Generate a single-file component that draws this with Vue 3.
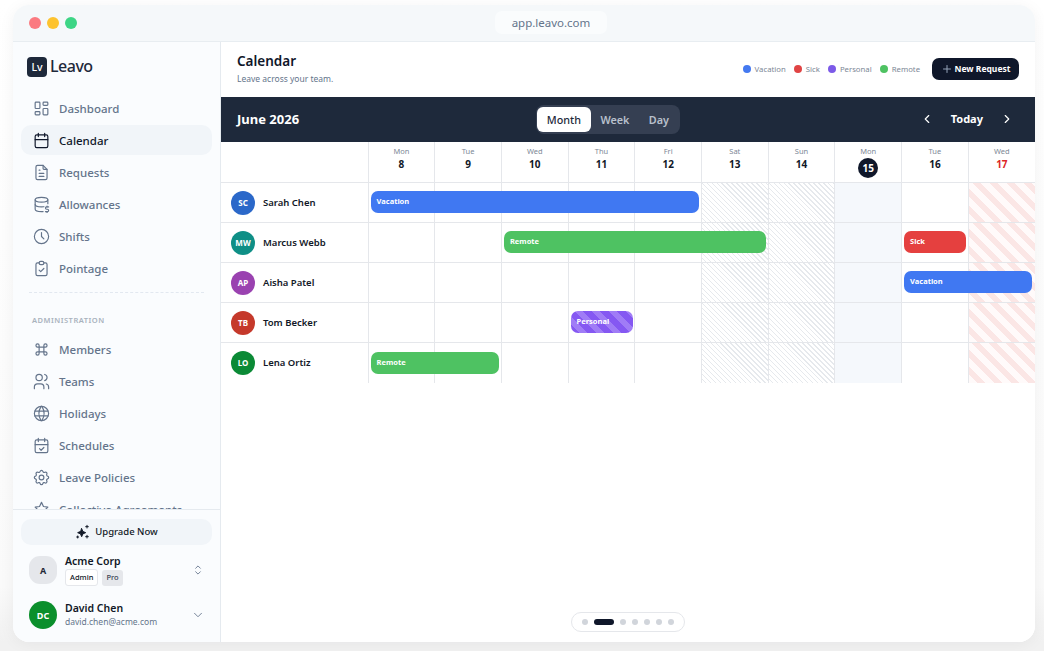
<script setup>
const mainNav = [
  { label: 'Dashboard', icon: 'dashboard' },
  { label: 'Calendar', icon: 'calendar', active: true },
  { label: 'Requests', icon: 'file' },
  { label: 'Allowances', icon: 'database' },
  { label: 'Shifts', icon: 'clock' },
  { label: 'Pointage', icon: 'clipboard' }
]

const adminNav = [
  { label: 'Members', icon: 'command' },
  { label: 'Teams', icon: 'users' },
  { label: 'Holidays', icon: 'globe' },
  { label: 'Schedules', icon: 'calcheck' },
  { label: 'Leave Policies', icon: 'gear' },
  { label: 'Collective Agreements', icon: 'award' }
]

const icons = {
  dashboard: ['M5 4h4a1 1 0 0 1 1 1v6a1 1 0 0 1-1 1H5a1 1 0 0 1-1-1V5a1 1 0 0 1 1-1z', 'M5 16h4a1 1 0 0 1 1 1v2a1 1 0 0 1-1 1H5a1 1 0 0 1-1-1v-2a1 1 0 0 1 1-1z', 'M15 12h4a1 1 0 0 1 1 1v6a1 1 0 0 1-1 1h-4a1 1 0 0 1-1-1v-6a1 1 0 0 1 1-1z', 'M15 4h4a1 1 0 0 1 1 1v2a1 1 0 0 1-1 1h-4a1 1 0 0 1-1-1V5a1 1 0 0 1 1-1z'],
  calendar: ['M6 5h12a2 2 0 0 1 2 2v12a2 2 0 0 1-2 2H6a2 2 0 0 1-2-2V7a2 2 0 0 1 2-2z', 'M16 3v4', 'M8 3v4', 'M4 11h16'],
  file: ['M14 3v4a1 1 0 0 0 1 1h4', 'M17 21H7a2 2 0 0 1-2-2V5a2 2 0 0 1 2-2h7l5 5v11a2 2 0 0 1-2 2z', 'M9 9h1', 'M9 13h6', 'M9 17h6'],
  database: ['M4 6c0 1.7 3.6 3 8 3s8-1.3 8-3-3.6-3-8-3-8 1.3-8 3', 'M4 6v6c0 1.7 3.6 3 8 3 1 0 2-.1 3-.2', 'M20 6v5', 'M4 12v6c0 1.7 3.6 3 8 3 .7 0 1.300-.03 2-.1', 'M21 15h-2.500a1.500 1.500 0 0 0 0 3h1a1.500 1.500 0 0 1 0 3H17', 'M19 21v1m0-8v1'],
  clock: ['M3 12a9 9 0 1 0 18 0a9 9 0 0 0-18 0', 'M12 7v5l3 3'],
  clipboard: ['M9 5H7a2 2 0 0 0-2 2v12a2 2 0 0 0 2 2h10a2 2 0 0 0 2-2V7a2 2 0 0 0-2-2h-2', 'M9 5a2 2 0 0 1 2-2h2a2 2 0 0 1 2 2a2 2 0 0 1-2 2h-2a2 2 0 0 1-2-2z', 'M9 14l2 2l4-4'],
  command: ['M7 9a2 2 0 1 1 2-2v10a2 2 0 1 1-2-2h10a2 2 0 1 1-2 2V7a2 2 0 1 1 2 2H7'],
  users: ['M5 7a4 4 0 1 0 8 0a4 4 0 0 0-8 0', 'M3 21v-2a4 4 0 0 1 4-4h4a4 4 0 0 1 4 4v2', 'M16 3.130a4 4 0 0 1 0 7.750', 'M21 21v-2a4 4 0 0 0-3-3.850'],
  globe: ['M3 12a9 9 0 1 0 18 0a9 9 0 0 0-18 0', 'M3.600 9h16.800', 'M3.600 15h16.800', 'M11.500 3a17 17 0 0 0 0 18', 'M12.500 3a17 17 0 0 1 0 18'],
  calcheck: ['M6 5h12a2 2 0 0 1 2 2v12a2 2 0 0 1-2 2H6a2 2 0 0 1-2-2V7a2 2 0 0 1 2-2z', 'M16 3v4', 'M8 3v4', 'M4 11h16', 'M9.500 16l2 2l3.500-3.500'],
  gear: ['M10.300 4.300c.4-1.800 3-1.800 3.400 0a1.700 1.700 0 0 0 2.600 1.100c1.500-.9 3.300.8 2.400 2.400a1.700 1.700 0 0 0 1 2.500c1.800.4 1.800 3 0 3.400a1.700 1.700 0 0 0-1 2.600c.9 1.500-.9 3.300-2.400 2.400a1.700 1.700 0 0 0-2.600 1c-.4 1.800-3 1.800-3.400 0a1.700 1.700 0 0 0-2.600-1c-1.500.9-3.300-.9-2.400-2.400a1.700 1.700 0 0 0-1-2.600c-1.800-.4-1.800-3 0-3.400a1.700 1.700 0 0 0 1-2.500c-.9-1.600.9-3.300 2.400-2.400c1 .6 2.300.1 2.600-1.100z', 'M9 12a3 3 0 1 0 6 0a3 3 0 0 0-6 0'],
  award: ['M12 3l2.500 5.200 5.500.8-4 4 1 5.500-5-2.700-5 2.700 1-5.500-4-4 5.500-.8z']
}

const days = [
  { name: 'Mon', num: 8 },
  { name: 'Tue', num: 9 },
  { name: 'Wed', num: 10 },
  { name: 'Thu', num: 11 },
  { name: 'Fri', num: 12 },
  { name: 'Sat', num: 13, kind: 'weekend' },
  { name: 'Sun', num: 14, kind: 'weekend' },
  { name: 'Mon', num: 15, kind: 'today' },
  { name: 'Tue', num: 16 },
  { name: 'Wed', num: 17, kind: 'holiday' }
]

const people = [
  { initials: 'SC', name: 'Sarah Chen', color: '#2b68c9', bars: [{ label: 'Vacation', type: 'vacation', from: 0, span: 5 }] },
  { initials: 'MW', name: 'Marcus Webb', color: '#0f8f86', bars: [{ label: 'Remote', type: 'remote', from: 2, span: 4 }, { label: 'Sick', type: 'sick', from: 8, span: 1 }] },
  { initials: 'AP', name: 'Aisha Patel', color: '#9a42b0', bars: [{ label: 'Vacation', type: 'vacation edge', from: 8, span: 2 }] },
  { initials: 'TB', name: 'Tom Becker', color: '#c5392b', bars: [{ label: 'Personal', type: 'personal', from: 3, span: 1 }] },
  { initials: 'LO', name: 'Lena Ortiz', color: '#0b8a36', bars: [{ label: 'Remote', type: 'remote', from: 0, span: 2 }] }
]

const legend = [
  { label: 'Vacation', color: '#4479f0' },
  { label: 'Sick', color: '#e04444' },
  { label: 'Personal', color: '#7c5ae8' },
  { label: 'Remote', color: '#4ec262' }
]
</script>

<template>
  <div class="page">
    <div class="window">
      <div class="titlebar">
        <div class="lights">
          <span class="light red"></span>
          <span class="light yellow"></span>
          <span class="light green"></span>
        </div>
        <div class="url">app.leavo.com</div>
      </div>

      <div class="body">
        <aside class="sidebar">
          <div class="logo">
            <span class="logo-mark">Lv</span>
            <span class="logo-name">Leavo</span>
          </div>

          <nav class="nav">
            <a v-for="item in mainNav" :key="item.label" class="nav-item" :class="{ active: item.active }">
              <svg class="nav-icon" viewBox="0 0 24 24"><path v-for="d in icons[item.icon]" :key="d" :d="d" /></svg>
              {{ item.label }}
            </a>
            <div class="nav-divider"></div>
            <div class="nav-heading">ADMINISTRATION</div>
            <a v-for="item in adminNav" :key="item.label" class="nav-item">
              <svg class="nav-icon" viewBox="0 0 24 24"><path v-for="d in icons[item.icon]" :key="d" :d="d" /></svg>
              {{ item.label }}
            </a>
          </nav>

          <div class="side-foot">
            <button class="upgrade">
              <svg class="spark" viewBox="0 0 24 24"><path d="M10 7l1.800 4.200L16 13l-4.200 1.800L10 19l-1.800-4.200L4 13l4.200-1.800z" /><path d="M18 2v4M16 4h4M18 17v4M16 19h4M4 18v3M2.500 19.500h3" /></svg>
              <span class="upgrade-text">Upgrade Now</span>
            </button>
            <div class="account">
              <span class="acc-avatar org">A</span>
              <div class="acc-text">
                <div class="acc-name">Acme Corp</div>
                <div class="badges"><span class="badge admin">Admin</span><span class="badge pro">Pro</span></div>
              </div>
              <svg class="acc-chev" viewBox="0 0 24 24"><path d="M8 9l4-4l4 4" /><path d="M16 15l-4 4l-4-4" /></svg>
            </div>
            <div class="account user">
              <span class="acc-avatar me">DC</span>
              <div class="acc-text">
                <div class="acc-name">David Chen</div>
                <div class="acc-mail">david.chen@acme.com</div>
              </div>
              <svg class="acc-chev" viewBox="0 0 24 24"><path d="M6 9l6 6l6-6" /></svg>
            </div>
          </div>
        </aside>

        <main class="main">
          <header class="head">
            <div class="head-left">
              <h1 class="title">Calendar</h1>
              <p class="sub">Leave across your team.</p>
            </div>
            <div class="head-right">
              <div class="legend">
                <span v-for="l in legend" :key="l.label" class="legend-item">
                  <i class="dot" :style="{ background: l.color }"></i>{{ l.label }}
                </span>
              </div>
              <button class="new-btn">
                <svg class="plus" viewBox="0 0 24 24"><path d="M12 5v14M5 12h14" /></svg>
                New Request
              </button>
            </div>
          </header>

          <div class="cal-bar">
            <div class="month">June 2026</div>
            <div class="segment">
              <span class="seg active">Month</span>
              <span class="seg">Week</span>
              <span class="seg">Day</span>
            </div>
            <div class="pager-nav">
              <svg class="nav-chev" viewBox="0 0 24 24"><path d="M15 6l-6 6l6 6" /></svg>
              <span class="today-btn">Today</span>
              <svg class="nav-chev" viewBox="0 0 24 24"><path d="M9 6l6 6l-6 6" /></svg>
            </div>
          </div>

          <div class="grid-head row-grid">
            <div class="corner"></div>
            <div v-for="d in days" :key="d.num" class="day-head">
              <span class="day-name">{{ d.name }}</span>
              <span class="day-num" :class="d.kind">{{ d.num }}</span>
            </div>
          </div>

          <div v-for="p in people" :key="p.name" class="row row-grid">
            <div class="person">
              <span class="avatar" :style="{ background: p.color }">{{ p.initials }}</span>
              <span class="person-name">{{ p.name }}</span>
            </div>
            <div v-for="(d, i) in days" :key="d.num" class="cell" :class="d.kind" :style="{ gridColumn: i + 2 }"></div>
            <div
              v-for="b in p.bars"
              :key="b.label"
              class="bar"
              :class="b.type"
              :style="{ gridColumn: `${b.from + 2} / span ${b.span}` }"
            >{{ b.label }}</div>
          </div>

          <div class="dots-wrap">
            <div class="dots">
              <span class="pg"></span>
              <span class="pg on"></span>
              <span class="pg"></span>
              <span class="pg"></span>
              <span class="pg"></span>
              <span class="pg"></span>
              <span class="pg"></span>
            </div>
          </div>
        </main>
      </div>
    </div>
  </div>
</template>

<style>
html, body { margin: 0; background: #fff; }
</style>

<style scoped>
.page {
  box-sizing: border-box;
  width: 1044px;
  height: 651px;
  padding: 5px 9px 9px 13px;
  display: flex;
  overflow: hidden;
  background: linear-gradient(#fff 0, #fafafa 90%, #f1f1f1 98.600%);
  font-family: "Noto Sans", sans-serif;
  color: #111827;
}
.window {
  flex: 1;
  display: flex;
  flex-direction: column;
  background: #fff;
  border-radius: 16px;
  overflow: hidden;
  box-shadow: 0 2px 16px rgba(15, 23, 42, 0.05);
}
.titlebar {
  height: 37px;
  flex: none;
  box-sizing: border-box;
  padding-bottom: 1px;
  display: flex;
  align-items: center;
  justify-content: center;
  background: #f5f8fa;
  border-bottom: 1px solid #e8edf1;
  position: relative;
}
.lights {
  position: absolute;
  left: 16px;
  top: 12px;
  display: flex;
  gap: 6px;
}
.light { width: 12px; height: 12px; border-radius: 50%; }
.light.red { background: #fb7a80; }
.light.yellow { background: #fdc32f; }
.light.green { background: #3dd585; }
.url {
  background: #fafcfd;
  border-radius: 7px;
  padding: 0 17px;
  height: 23px;
  line-height: 23px;
  font-size: 11.500px;
  color: #64748b;
  margin-left: 54px;
}
.body { flex: 1; display: flex; min-height: 0; }

.sidebar {
  width: 208px;
  flex: none;
  box-sizing: border-box;
  border-right: 1px solid #e5eaef;
  background: #fafcfe;
  display: flex;
  flex-direction: column;
}
.logo {
  height: 49px;
  flex: none;
  padding: 0 14px;
  display: flex;
  align-items: center;
  gap: 3px;
}
.logo-mark {
  width: 20px;
  height: 20px;
  border-radius: 4px;
  background: #1e293b;
  color: #fff;
  font-size: 10.500px;
  font-weight: 500;
  display: flex;
  align-items: center;
  justify-content: center;
}
.logo-name { font-size: 16px; font-weight: 500; color: #1e293b; letter-spacing: -0.5px; padding-bottom: 2px; }
.nav {
  flex: 1;
  min-height: 0;
  overflow: hidden;
  padding: 2px 8px 0;
}
.nav-item {
  height: 30px;
  margin-bottom: 2px;
  box-sizing: border-box;
  display: flex;
  align-items: center;
  gap: 8.500px;
  padding-left: 10.500px;
  border-radius: 10px;
  font-size: 11.500px;
  font-weight: 500;
  color: #64748b;
  white-space: nowrap;
}
.nav-item.active { background: #f1f5f9; color: #0f172a; }
.nav-icon {
  width: 19px;
  height: 19px;
  flex: none;
  fill: none;
  stroke: currentColor;
  stroke-width: 1.500;
  stroke-linecap: round;
  stroke-linejoin: round;
}
.nav-divider {
  margin: 9px 8px 0;
  border-top: 1px dashed #e2e8f0;
}
.nav-heading {
  margin: 22px 0 0 11px;
  height: 19px;
  font-size: 7.500px;
  font-weight: 600;
  letter-spacing: 0.5px;
  color: #a9b2bd;
}
.side-foot {
  flex: none;
  border-top: 1px solid #e5eaef;
  padding: 9px 8px 0;
  height: 133px;
  box-sizing: border-box;
}
.upgrade {
  width: 100%;
  height: 26px;
  border: 0;
  border-radius: 10px;
  background: #f1f5f9;
  display: flex;
  align-items: center;
  justify-content: center;
  gap: 4px;
  font: 500 9.500px "Noto Sans", sans-serif;
  color: #111827;
}
.upgrade-text { padding-bottom: 1px; }
.spark {
  width: 16px;
  height: 16px;
  fill: #111827;
  stroke: #111827;
  stroke-width: 1.500;
  stroke-linecap: round;
  stroke-linejoin: round;
}
.account {
  display: flex;
  align-items: center;
  margin: 9px 0 0;
  padding: 0 8px;
  gap: 8px;
}
.account.user { margin-top: 15px; }
.acc-avatar {
  width: 28px;
  height: 28px;
  flex: none;
  border-radius: 50%;
  display: flex;
  align-items: center;
  justify-content: center;
  font-size: 9px;
  font-weight: 700;
}
.acc-avatar.org { background: #e5e7eb; color: #1f2937; border-radius: 11px; }
.acc-avatar.me { background: #0b8f2c; color: #fff; }
.acc-text { flex: 1; min-width: 0; }
.acc-name { font-size: 10.500px; font-weight: 600; color: #111827; line-height: 13px; }
.account:not(.user) .acc-name { padding-top: 1px; }
.acc-mail { font-size: 8.500px; color: #64748b; line-height: 13px; }
.badges { display: flex; gap: 4px; margin-top: 1px; }
.badge {
  font-size: 7.500px;
  font-weight: 500;
  line-height: 15px;
  padding: 0 4px;
  border-radius: 3px;
}
.badge.admin { background: #fff; border: 1px solid #e5e7eb; color: #111827; }
.badge.pro { background: #e5e7eb; color: #374151; margin-top: 1px; }
.acc-chev {
  width: 14px;
  height: 14px;
  flex: none;
  margin-right: -1px;
  fill: none;
  stroke: #64748b;
  stroke-width: 1.500;
  stroke-linecap: round;
  stroke-linejoin: round;
}

.main {
  flex: 1;
  min-width: 0;
  display: flex;
  flex-direction: column;
  background: #fff;
}
.head {
  height: 55px;
  flex: none;
  box-sizing: border-box;
  padding: 0 16px 2px;
  display: flex;
  align-items: center;
  justify-content: space-between;
}
.head-left { margin-bottom: 2px; }
.title { margin: 0; font-size: 13.500px; font-weight: 600; line-height: 18px; color: #0f172a; }
.sub { margin: 3px 0 0; font-size: 8.500px; line-height: 11px; color: #64748b; }
.head-right { display: flex; align-items: center; gap: 12px; }
.legend { display: flex; gap: 8px; }
.legend-item { display: flex; align-items: center; gap: 4px; font-size: 7.750px; color: #7c8796; }
.dot { width: 8px; height: 8px; border-radius: 50%; }
.new-btn {
  width: 87px;
  height: 22px;
  border: 0;
  border-radius: 7px;
  background: #0f172a;
  color: #fff;
  font: 700 8.500px "Noto Sans", sans-serif;
  display: flex;
  align-items: center;
  justify-content: center;
  gap: 2px;
}
.plus { width: 12px; height: 12px; fill: none; stroke: #94a3b8; stroke-width: 2; stroke-linecap: round; }

.cal-bar {
  height: 45px;
  flex: none;
  box-sizing: border-box;
  padding: 0 16px;
  background: #1e293b;
  display: flex;
  justify-content: space-between;
  align-items: center;
}
.month { font-size: 13px; font-weight: 700; color: #fff; padding-bottom: 2px; }
.segment {
  display: flex;
  padding: 2px 1px;
  margin-right: 3px;
  background: #353f52;
  border-radius: 8px;
  height: 29px;
  box-sizing: border-box;
}
.seg {
  display: flex;
  align-items: center;
  padding: 0 9.700px 1px;
  font-size: 10.800px;
  font-weight: 600;
  color: #b8c0cc;
  border-radius: 6px;
}
.seg.active { background: #fff; color: #1e293b; font-weight: 500; }
.pager-nav {
  display: flex;
  align-items: center;
  gap: 17px;
  padding-right: 5px;
  padding-bottom: 1px;
}
.today-btn { font-size: 11px; font-weight: 700; color: #fff; padding-bottom: 1px; }
.nav-chev { width: 14px; height: 14px; fill: none; stroke: #fff; stroke-width: 2; stroke-linecap: round; stroke-linejoin: round; }

.row-grid {
  display: grid;
  grid-template-columns: 146.550px repeat(9, 66.700px) 1fr;
  flex: none;
}
.grid-head { height: 41px; box-sizing: border-box; border-bottom: 1px solid #e5e7eb; }
.day-head {
  border-left: 1px solid #e5e7eb;
  display: flex;
  flex-direction: column;
  align-items: center;
  padding-top: 4px;
}
.day-name { font-size: 7.500px; line-height: 10px; color: #7c8796; }
.day-num {
  font-size: 10px;
  font-weight: 700;
  color: #111827;
  line-height: 16px;
  width: 20px;
  text-align: center;
}
.day-num.today { background: #0f172a; color: #fff; border-radius: 50%; line-height: 20px; margin-top: 2px; }
.day-num.holiday { color: #dc2626; }

.row { height: 40px; box-sizing: border-box; border-bottom: 1px solid #e5e7eb; }
.row:nth-last-child(2) { border-bottom: 0; }
.person {
  grid-row: 1;
  grid-column: 1;
  display: flex;
  align-items: center;
  gap: 8px;
  padding-left: 10px;
}
.row:nth-last-child(2) .person { padding-bottom: 1px; }
.avatar {
  width: 24px;
  height: 24px;
  border-radius: 50%;
  display: flex;
  align-items: center;
  justify-content: center;
  color: #fff;
  font-size: 8px;
  font-weight: 700;
}
.person-name { font-size: 9.500px; font-weight: 600; color: #111827; }
.cell { grid-row: 1; border-left: 1px solid #e5e7eb; }
.cell.weekend {
  background: repeating-linear-gradient(45deg, #fff 0 2.500px, #e6e9ed 2.500px 3.500px);
}
.cell.today { background: #f5f8fc; }
.cell.holiday {
  background: repeating-linear-gradient(45deg, #fffafa 0 6px, #fbe6e5 6px 12px);
}
.bar {
  grid-row: 1;
  align-self: start;
  z-index: 1;
  height: 22px;
  margin: 8px 1.500px 0 3px;
  padding: 0 6px;
  border-radius: 7px;
  color: #fff;
  font-size: 7.500px;
  font-weight: 700;
  line-height: 20px;
}
.row:nth-last-child(2) .bar { margin-top: 9px; }
.bar.edge { margin-right: 3px; }
.bar.vacation { background: #4078f2; }
.bar.remote { background: #4ec262; }
.bar.sick { background: #e5403f; }
.bar.personal { background: repeating-linear-gradient(45deg, #8558f2 0 6px, #a07cf6 6px 12px); }

.dots-wrap {
  margin-top: auto;
  padding-bottom: 10px;
  display: flex;
  justify-content: center;
}
.dots {
  height: 20px;
  width: 114px;
  box-sizing: border-box;
  border: 1px solid #e5e7eb;
  border-radius: 10px;
  background: #fff;
  display: flex;
  align-items: center;
  justify-content: center;
  gap: 6px;
}
.pg { width: 6px; height: 6px; border-radius: 3px; background: #d1d5db; }
.pg.on { width: 20px; background: #0f172a; }
</style>
